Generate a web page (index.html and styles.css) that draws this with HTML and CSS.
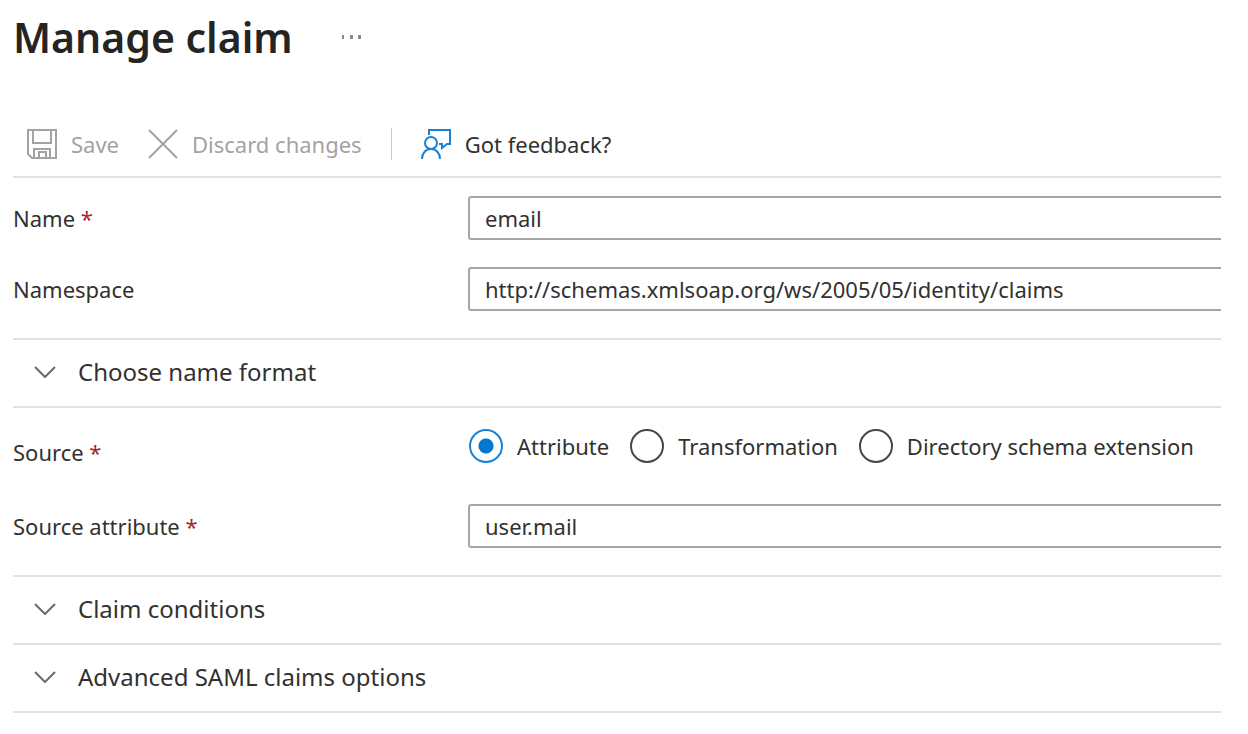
FILE: index.html
```html
<!DOCTYPE html>
<html lang="en">
<head>
    <meta charset="UTF-8">
    <meta name="viewport" content="width=device-width, initial-scale=1.0">
    <title>Manage claim</title>
    <link rel="stylesheet" href="styles.css">
</head>
<body>
    <main class="blade">
        <header class="header">
            <h1>Manage claim</h1>
            <button class="more-btn" type="button" aria-label="More options">
                <svg width="22" height="6" viewBox="0 0 22 6" fill="#8a8a8a"><path d="M1 1h2v4H1zM9 1h3v4H9zM17 1h3v4h-3z"/></svg>
            </button>
        </header>

        <div class="toolbar">
            <button class="tool-btn" type="button" disabled>
                <svg width="30" height="30" viewBox="0 0 30 30" fill="none" stroke="#a3a3a3" stroke-width="2"><path d="M1 1h28v28H5l-4-4zM6 1v13h18V1M7 29v-9h16v9M12 29v-6h7v6"/></svg>
                Save
            </button>
            <button class="tool-btn" type="button" disabled>
                <svg width="30" height="30" viewBox="0 0 30 30" fill="none" stroke="#a3a3a3" stroke-width="2"><path d="M1 1l28 28M29 1L1 29"/></svg>
                Discard changes
            </button>
            <span class="divider"></span>
            <button class="tool-btn" type="button">
                <svg width="30" height="30" viewBox="0 0 30 30" fill="none" stroke="#1683d8" stroke-width="2"><path d="M8 6V1h21v14h-3l-5 4v-4h-3"/><circle cx="10" cy="14" r="6"/><path d="M1 30c0-6 4-10 9-10s9 4 9 10"/></svg>
                Got feedback?
            </button>
        </div>

        <form>
            <div class="fields">
                <div class="field">
                    <label for="name">Name <span class="required">*</span></label>
                    <input class="text-input" id="name" type="text" value="email">
                </div>
                <div class="field">
                    <label for="namespace">Namespace</label>
                    <input class="text-input" id="namespace" type="text" value="http://schemas.xmlsoap.org/ws/2005/05/identity/claims">
                </div>
            </div>

            <div class="sections">
                <button class="section-btn" type="button" aria-expanded="false">
                    <svg width="22" height="12" viewBox="0 0 22 12" fill="none" stroke="#6b6b6b" stroke-width="2"><path d="M1 1l10 10L21 1"/></svg>
                    Choose name format
                </button>
            </div>

            <div class="fields source-fields">
                <div class="field" role="radiogroup" aria-labelledby="source-label">
                    <span id="source-label">Source <span class="required">*</span></span>
                    <div class="radios">
                        <label class="radio"><input type="radio" name="source" checked>Attribute</label>
                        <label class="radio"><input type="radio" name="source">Transformation</label>
                        <label class="radio"><input type="radio" name="source">Directory schema extension</label>
                    </div>
                </div>
                <div class="field">
                    <label for="source-attribute">Source attribute <span class="required">*</span></label>
                    <input class="text-input" id="source-attribute" type="text" value="user.mail">
                </div>
            </div>

            <div class="sections">
                <button class="section-btn" type="button" aria-expanded="false">
                    <svg width="22" height="12" viewBox="0 0 22 12" fill="none" stroke="#6b6b6b" stroke-width="2"><path d="M1 1l10 10L21 1"/></svg>
                    Claim conditions
                </button>
                <button class="section-btn" type="button" aria-expanded="false">
                    <svg width="22" height="12" viewBox="0 0 22 12" fill="none" stroke="#6b6b6b" stroke-width="2"><path d="M1 1l10 10L21 1"/></svg>
                    Advanced SAML claims options
                </button>
            </div>
        </form>
    </main>
</body>
</html>
```
FILE: styles.css
```css
* {
    margin: 0;
    padding: 0;
    box-sizing: border-box;
}

body {
    font-family: 'Segoe UI', 'Noto Sans', sans-serif;
    font-size: 22px;
    line-height: 32px;
    color: #323130;
    background: #fff;
}

button,
input {
    font: inherit;
    color: inherit;
}

button {
    border: none;
    background: none;
    cursor: pointer;
}

svg {
    flex: none;
}

.blade {
    padding: 7px 27px 20px 13px;
    overflow: hidden;
}

.header {
    display: flex;
    align-items: center;
    gap: 48px;
}

.header h1 {
    font-size: 41px;
    line-height: 60px;
    font-weight: 600;
    color: #252423;
}

.more-btn {
    display: flex;
}

.toolbar {
    display: flex;
    align-items: center;
    gap: 29px;
    margin-top: 43px;
    padding: 2px 14px 0;
    height: 68px;
    border-bottom: 2px solid #e1e1e1;
}

.tool-btn {
    display: flex;
    align-items: center;
    gap: 14px;
    white-space: nowrap;
}

.tool-btn:disabled {
    color: #a3a3a3;
    cursor: default;
}

.divider {
    width: 1px;
    height: 32px;
    background: #c8c8c8;
}

.fields {
    display: flex;
    flex-direction: column;
    gap: 27px;
    padding: 18px 0 27px;
}

.source-fields {
    gap: 30px;
    padding-top: 22px;
}

.field {
    display: grid;
    grid-template-columns: 455px 1fr;
    align-items: center;
    min-height: 44px;
}

.required {
    color: #a4262c;
}

/* inputs run off the right edge of the blade */
.text-input {
    width: 100%;
    height: 44px;
    padding: 0 15px;
    border: 2px solid #a6a6a6;
    border-right: none;
    border-radius: 3px 0 0 3px;
    background: #fff;
    outline: none;
}

.radios {
    display: flex;
    align-self: start;
    gap: 21px;
    padding-left: 1px;
}

.radio {
    display: flex;
    align-items: center;
    gap: 14px;
    height: 32px;
    white-space: nowrap;
}

.radio input {
    appearance: none;
    width: 34px;
    height: 34px;
    border: 2px solid #484644;
    border-radius: 50%;
}

.radio input:checked {
    border-color: #1683d8;
    background: radial-gradient(circle, #0078d4 7px, transparent 8px);
}

.sections {
    border-top: 2px solid #e1e1e1;
}

.section-btn {
    display: flex;
    align-items: center;
    gap: 22px;
    width: 100%;
    height: 68px;
    padding: 0 21px 2px;
    border-bottom: 2px solid #e1e1e1;
    font-size: 24px;
    text-align: left;
}
```
